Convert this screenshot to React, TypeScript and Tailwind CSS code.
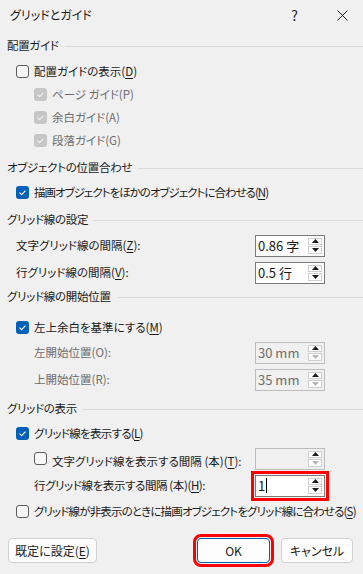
import React from "react";

const font = {
  fontFamily: '"Noto Sans CJK JP", "Noto Sans", sans-serif',
  fontFeatureSettings: '"palt"',
};

function Check({ checked, disabled }: { checked?: boolean; disabled?: boolean }) {
  if (disabled) {
    return (
      <span className="w-[13px] h-[13px] rounded-[3px] bg-[#c6c6c6] flex items-center justify-center shrink-0">
        <svg width="9" height="9" viewBox="0 0 9 9">
          <path d="M1.5 4.6 L3.6 6.6 L7.5 2.6" stroke="#eeeeee" strokeWidth="1.2" fill="none" />
        </svg>
      </span>
    );
  }
  if (checked) {
    return (
      <span className="w-[13px] h-[13px] rounded-[3px] bg-[#005fb8] flex items-center justify-center shrink-0">
        <svg width="9" height="9" viewBox="0 0 9 9">
          <path d="M1.5 4.6 L3.6 6.6 L7.5 2.6" stroke="#ffffff" strokeWidth="1.2" fill="none" />
        </svg>
      </span>
    );
  }
  return <span className="w-[13px] h-[13px] rounded-[3px] border border-[#5c5c5c] bg-[#f7f7f7] shrink-0" />;
}

function Label({
  text,
  k,
  gray,
  colon,
  tight = "",
}: {
  text: string;
  k?: string;
  gray?: boolean;
  colon?: boolean;
  tight?: string;
}) {
  return (
    <span className={`whitespace-nowrap text-[11.5px] ${tight} ${gray ? "text-[#6d6d6d]" : "text-[#1a1a1a]"}`}>
      {text}
      {k && (
        <>
          (<span className="underline underline-offset-2">{k}</span>)
        </>
      )}
      {colon && ":"}
    </span>
  );
}

function Header({ text }: { text: string }) {
  return (
    <div className="h-[20px] flex items-center pl-[7px]">
      <span className="text-[11.5px] text-[#1a1a1a] whitespace-nowrap tracking-[-0.3px]">{text}</span>
      <div className="flex-1 h-px bg-[#d9d9d9] ml-[6px]" />
    </div>
  );
}

function Tri({ up, color }: { up?: boolean; color: string }) {
  return (
    <svg width="7" height="4" viewBox="0 0 7 4">
      <path d={up ? "M0 4 L3.5 0 L7 4 Z" : "M0 0 L3.5 4 L7 0 Z"} fill={color} />
    </svg>
  );
}

function Spin({ value, disabled, red }: { value: string; disabled?: boolean; red?: boolean }) {
  return (
    <div
      className={`w-[70px] h-[22px] flex border ${
        disabled ? "border-[#bdbdbd] bg-[#f0f0f0]" : "border-[#7a7a7a] bg-white"
      } ${red ? "outline-3 outline-[#ff0000] outline-offset-[1px]" : ""}`}
    >
      <div className={`flex-1 flex items-center pl-[2px] text-[13px] ${disabled ? "text-[#6d6d6d]" : "text-[#1a1a1a]"}`}>
        {value}
        {red && <span className="w-px h-[15px] bg-black ml-px" />}
      </div>
      <div className="w-[16px] flex flex-col gap-px py-[2px] pr-[2px]">
        <div className="flex-1 border border-[#cfcfcf] bg-white flex items-center justify-center">
          <Tri up color="#1a1a1a" />
        </div>
        <div className="flex-1 border border-[#cfcfcf] bg-white flex items-center justify-center">
          <Tri color={disabled ? "#b5b5b5" : "#1a1a1a"} />
        </div>
      </div>
    </div>
  );
}

export default function App() {
  return (
    <div className="w-[363px] h-[574px] bg-[#f0f0f0] flex flex-col overflow-hidden" style={font}>
      {/* Title bar */}
      <div className="h-[30px] flex items-center pl-[10px]">
        <span className="text-[12px] text-[#1a1a1a] flex-1">グリッドとガイド</span>
        <span className="text-[14px] text-[#1a1a1a] mr-[39px]">?</span>
        <svg width="11" height="11" viewBox="0 0 11 11" className="mr-[15px]">
          <path d="M0.5 0.5 L10.5 10.5 M10.5 0.5 L0.5 10.5" stroke="#1a1a1a" strokeWidth="1" />
        </svg>
      </div>

      <div className="mt-[6px]">
        <Header text="配置ガイド" />
      </div>
      <div className="mt-[4px] h-[23px] flex items-center gap-[5px] pl-[16px]">
        <Check />
        <Label text="配置ガイドの表示" k="D" />
      </div>
      {["ページ ガイド(P)", "余白ガイド(A)", "段落ガイド(G)"].map((t) => (
        <div key={t} className="h-[23px] flex items-center gap-[5px] pl-[34px]">
          <Check disabled />
          <Label text={t} gray />
        </div>
      ))}

      <div className="mt-[6px]">
        <Header text="オブジェクトの位置合わせ" />
      </div>
      <div className="mt-[3px] h-[23px] flex items-center gap-[5px] pl-[16px]">
        <Check checked />
        <Label text="描画オブジェクトをほかのオブジェクトに合わせる" k="N" tight="tracking-[-1px]" />
      </div>

      <div className="mt-[6px]">
        <Header text="グリッド線の設定" />
      </div>
      <div className="mt-[3px] h-[25px] flex items-center pl-[16px] pr-[38px] justify-between">
        <Label text="文字グリッド線の間隔" k="Z" colon />
        <Spin value="0.86 字" />
      </div>
      <div className="mt-[2px] h-[25px] flex items-center pl-[16px] pr-[38px] justify-between">
        <Label text="行グリッド線の間隔" k="V" colon />
        <Spin value="0.5 行" />
      </div>

      <div className="mt-[2px]">
        <Header text="グリッド線の開始位置" />
      </div>
      <div className="mt-[9px] h-[23px] flex items-center gap-[5px] pl-[16px]">
        <Check checked />
        <Label text="左上余白を基準にする" k="M" />
      </div>
      <div className="h-[27px] flex items-center pl-[34px] pr-[38px] justify-between">
        <Label text="左開始位置(O):" gray />
        <Spin value="30 mm" disabled />
      </div>
      <div className="h-[27px] flex items-center pl-[34px] pr-[38px] justify-between">
        <Label text="上開始位置(R):" gray />
        <Spin value="35 mm" disabled />
      </div>

      <div className="mt-[6px]">
        <Header text="グリッドの表示" />
      </div>
      <div className="mt-[3px] h-[23px] flex items-center gap-[5px] pl-[16px]">
        <Check checked />
        <Label text="グリッド線を表示する" k="L" tight="tracking-[-0.7px]" />
      </div>
      <div className="h-[27px] flex items-center pl-[34px] pr-[38px]">
        <Check />
        <span className="ml-[5px] flex-1">
          <Label text="文字グリッド線を表示する間隔 (本)" k="T" colon />
        </span>
        <Spin value="" disabled />
      </div>
      <div className="h-[27px] flex items-center pl-[34px] pr-[38px] justify-between">
        <Label text="行グリッド線を表示する間隔 (本)" k="H" colon tight="tracking-[-0.4px]" />
        <Spin value="1" red />
      </div>
      <div className="mt-[1px] h-[23px] flex items-center gap-[5px] pl-[16px]">
        <Check />
        <Label
          text="グリッド線が非表示のときに描画オブジェクトをグリッド線に合わせる"
          k="S"
          tight="tracking-[-0.85px]"
        />
      </div>

      {/* Buttons */}
      <div className="mt-[15px] h-[25px] flex items-center pl-[8px] pr-[10px]">
        <button className="w-[89px] h-[25px] bg-[#fdfdfd] border border-[#d0d0d0] rounded-[4px] text-[12px] text-[#1a1a1a]">
          既定に設定(<span className="underline underline-offset-2">E</span>)
        </button>
        <div className="flex-1" />
        <button className="w-[73px] h-[25px] bg-[#fdfdfd] border border-[#005fb8] rounded-[4px] text-[12px] text-[#1a1a1a] outline-3 outline-[#ff0000] outline-offset-[1px]">
          OK
        </button>
        <button className="ml-[11px] w-[72px] h-[25px] bg-[#fdfdfd] border border-[#d0d0d0] rounded-[4px] text-[12px] text-[#1a1a1a]">
          キャンセル
        </button>
      </div>
    </div>
  );
}
